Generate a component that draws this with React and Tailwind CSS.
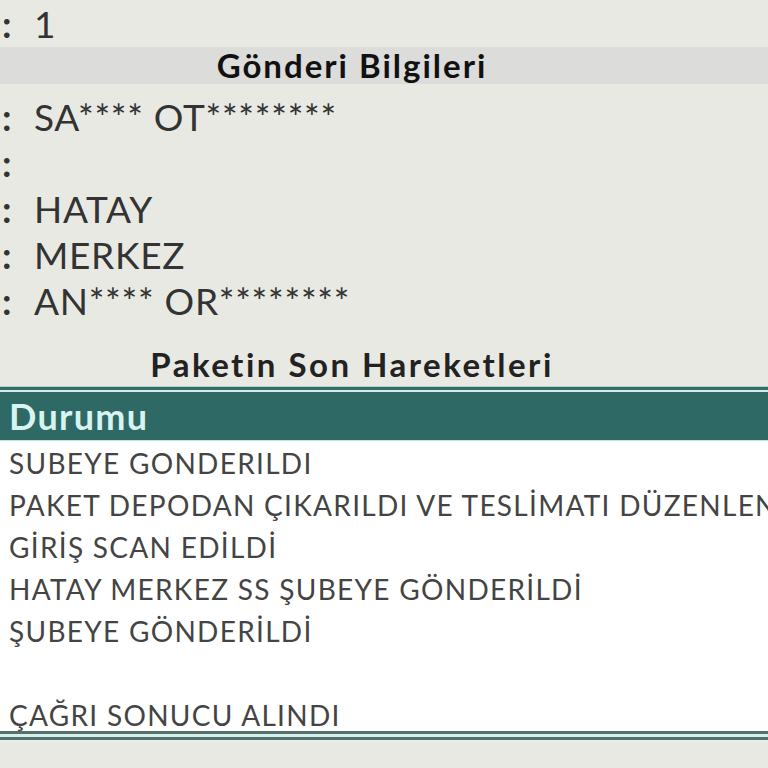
const gonderen = [
  '1',
]

const bilgiler = [
  'SA**** OT********',
  '',
  'HATAY',
  'MERKEZ',
  'AN**** OR********',
]

const hareketler = [
  'SUBEYE GONDERILDI',
  'PAKET DEPODAN ÇIKARILDI VE TESLİMATI DÜZENLENDİ',
  'GİRİŞ SCAN EDİLDİ',
  'HATAY MERKEZ SS ŞUBEYE GÖNDERİLDİ',
  'ŞUBEYE GÖNDERİLDİ',
  '',
  'ÇAĞRI SONUCU ALINDI',
]

function InfoRow({ value, className = 'h-[46px]' }) {
  return (
    <div className={`flex items-center text-[37px] tracking-[0.7px] text-[#333] ${className}`}>
      <span className="w-[34px] pl-[2px] font-bold">:</span>
      <span>{value}</span>
    </div>
  )
}

export default function App() {
  return (
    <div className="w-[768px] h-[768px] overflow-hidden bg-[#e9e9e4]" style={{ fontFamily: 'Lato, "Open Sans", sans-serif' }}>
      {gonderen.map((v, i) => <InfoRow key={i} value={v} className="h-[47px]" />)}

      <div className="h-[37px] bg-[#dcdcda] flex items-center justify-center pr-[64px] text-[33px] tracking-[2px] font-bold text-[#111]">
        Gönderi Bilgileri
      </div>
      <div className="h-[10px]" />
      {bilgiler.map((v, i) => <InfoRow key={i} value={v} />)}

      <div className="h-[62px] flex items-center justify-center pr-[64px] pt-[20px] text-[33px] tracking-[2.5px] font-bold text-[#222]">
        Paketin Son Hareketleri
      </div>

      <div className="bg-white">
        <div className="h-px bg-[#a9d3cc]" />
        <div className="h-[3px] bg-[#3b6a66]" />
        <div className="h-[2px] bg-[#cdeee9]" />
        <div className="h-[48px] bg-[#2f6966] flex items-center px-[9px] text-[36px] tracking-[1.3px] font-bold text-[#d8f4f0]">
          Durumu
        </div>
        <div className="h-px bg-[#bfe3dd]" />
        {hareketler.map((h, i) => (
          <div key={i} className={`flex items-center pl-[9px] pt-[2px] whitespace-nowrap overflow-hidden text-[28px] tracking-[1.3px] text-[#444] ${i === hareketler.length - 1 ? 'h-[38px] pt-[5px]' : 'h-[42px]'}`}>
            {h}
          </div>
        ))}
        <div className="h-[3px] bg-[#566f6b]" />
        <div className="h-[3px] bg-[#d5efea]" />
        <div className="h-[3px] bg-[#566f6b]" />
        <div className="h-[2px] bg-[#e0f2ee]" />
      </div>
    </div>
  )
}
